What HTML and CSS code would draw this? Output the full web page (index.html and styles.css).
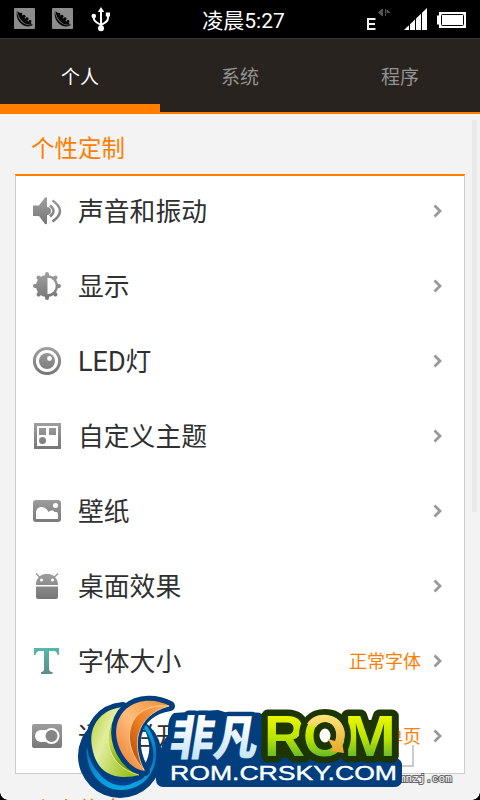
FILE: index.html
```
<!DOCTYPE html>
<html lang="zh-CN">
<head>
    <meta charset="UTF-8">
    <title>设置</title>
    <link rel="stylesheet" href="styles.css">
</head>
<body>
<div class="screen">
    <svg class="defs" width="0" height="0">
        <defs>
            <linearGradient id="gray" x1="0" y1="0" x2="0" y2="30" gradientUnits="userSpaceOnUse">
                <stop offset="0" stop-color="#a2a2a2"/><stop offset="1" stop-color="#737373"/>
            </linearGradient>
            <linearGradient id="teal" x1="0" y1="0" x2="0" y2="1">
                <stop offset="0" stop-color="#55b9aa"/><stop offset="1" stop-color="#5b8f89"/>
            </linearGradient>
            <symbol id="pea" viewBox="0 0 21 21">
                <rect width="21" height="21" rx="1" fill="#8c8c8c"/>
                <path d="M3 2.500C3 8 6 13 10 15.500c3 2 6 2 9.500 1-3 2.500-8 2.500-11.500 0C3.500 13 2 8 3 2.500z" fill="#050505"/>
                <path d="M3.500 3C6 5 8 6.500 9 8l5 5 4.500 3.500q-6 1-9-2Q4 10 3.500 3z" fill="#050505"/>
                <g fill="#050505"><circle cx="7" cy="6" r="1.300"/><circle cx="10" cy="8.200" r="1.500"/><circle cx="13" cy="10.800" r="1.600"/><circle cx="16" cy="13.500" r="1.400"/></g>
            </symbol>
            <symbol id="arrow" viewBox="0 0 10 14">
                <path d="M1.500 1.500 7 7l-5.500 5.500" fill="none" stroke="#999" stroke-width="2.800"/>
            </symbol>
        </defs>
    </svg>

    <div class="statusbar">
        <div class="status-left">
            <svg width="21" height="21"><use href="#pea"/></svg>
            <svg width="21" height="21"><use href="#pea"/></svg>
            <svg class="usb" width="20" height="25" viewBox="0 0 20 25">
                <path d="M10 4v17M2.800 9v2.500c0 3 3 4 7.200 6.500 4-2 7-3.500 7-7V8" fill="none" stroke="#fff" stroke-width="2"/>
                <path d="M10 0l3.200 5H6.800z" fill="#fff"/>
                <circle cx="2.800" cy="9" r="2.300" fill="#fff"/><circle cx="10" cy="21.200" r="3" fill="#fff"/><path d="M14.800 5.500h4.200v4h-4.200z" fill="#fff"/>
            </svg>
        </div>
        <div class="time">凌晨5:27</div>
        <svg class="status-right" width="101" height="24" viewBox="0 0 101 24">
            <path d="M1 11h8.500M1 16h8M1 21h8.500M2 10v12" fill="none" stroke="#eee" stroke-width="2"/>
            <path d="M16.500 1v7l-4-3.500zM19.500 1v7M21 2l3 2.500h-3z" stroke="#555" stroke-width="1" fill="#555"/>
            <path d="M38 22 61 0v22z" fill="#fff"/>
            <path d="M43.500 14v8M49.500 10v12M55.500 4v18" stroke="#000" stroke-width="1"/>
            <path d="M73 4h27v16H73v-3.500h-2v-9h2z" fill="#fff"/>
            <rect x="75.500" y="6.500" width="22" height="11" rx="1" fill="#fff" stroke="#000"/>
        </svg>
    </div>

    <div class="tabs">
        <div class="tab active">个人</div>
        <div class="tab">系统</div>
        <div class="tab">程序</div>
    </div>

    <div class="content">
        <h2 class="section-title">个性定制</h2>
        <div class="card">
            <div class="row">
                <svg class="icon" viewBox="0 0 30 30">
                    <path d="M1 9.500h6L13 1.500q2-1 2 1v8.500a4 4 0 0 1 0 8V27q0 2-2 1l-6-8H1z" fill="url(#gray)"/>
                    <path d="M18 9.500q7 5.500 0 11M20.500 4.500q15 10.500 0 21" fill="none" stroke="url(#gray)" stroke-width="2.500"/>
                </svg>
                <span class="label">声音和振动</span>
                <svg class="arrow"><use href="#arrow"/></svg>
            </div>
            <div class="row">
                <svg class="icon" viewBox="0 0 30 30">
                    <path d="M15 3v24M3 15h24M6.500 6.500l17 17M23.500 6.500l-17 17" stroke="url(#gray)" stroke-width="4" stroke-linecap="round"/>
                    <circle cx="15" cy="15" r="11" fill="url(#gray)"/>
                    <path d="M15.500 6.800a8.200 8.200 0 0 1 0 16.400z" fill="#fff"/>
                </svg>
                <span class="label">显示</span>
                <svg class="arrow"><use href="#arrow"/></svg>
            </div>
            <div class="row">
                <svg class="icon" viewBox="0 0 30 30">
                    <circle cx="15" cy="15" r="12.600" fill="none" stroke="url(#gray)" stroke-width="3"/>
                    <circle cx="15" cy="15" r="8" fill="url(#gray)"/>
                    <circle cx="17.500" cy="12.500" r="2.400" fill="#fff"/>
                </svg>
                <span class="label"><span class="latin">LED</span>灯</span>
                <svg class="arrow"><use href="#arrow"/></svg>
            </div>
            <div class="row">
                <svg class="icon" viewBox="0 0 30 30">
                    <path d="M2 2h27v26H2zM5 5v20h21V5z" fill="url(#gray)" fill-rule="evenodd"/>
                    <path d="M7 7h7v7H7zM17 7h7v7h-7z" fill="url(#gray)"/>
                    <circle cx="10.500" cy="19.500" r="3.500" fill="url(#gray)"/>
                </svg>
                <span class="label">自定义主题</span>
                <svg class="arrow"><use href="#arrow"/></svg>
            </div>
            <div class="row">
                <svg class="icon" viewBox="0 0 30 30">
                    <rect x="1" y="4" width="28" height="22" rx="3" fill="url(#gray)"/>
                    <path d="M4 23v-7c1-7 10-6 12.500 0 3-2.500 5.500-1.500 6 0h2.500q1.500 1 1 7z" fill="#fff"/>
                    <circle cx="23.500" cy="9.500" r="2.500" fill="#fff"/>
                </svg>
                <span class="label">壁纸</span>
                <svg class="arrow"><use href="#arrow"/></svg>
            </div>
            <div class="row">
                <svg class="icon" viewBox="0 0 30 30">
                    <path d="M4 2.500l4 4M26 2.500l-4 4" stroke="url(#gray)" stroke-width="1.500"/>
                    <path d="M4 14C4 -1 26 -1 26 14zM4 15.500h22V26q0 2-2 2H6q-2 0-2-2z" fill="url(#gray)"/>
                    <circle cx="9.500" cy="9" r="1.500" fill="#fff"/><circle cx="20.500" cy="9" r="1.500" fill="#fff"/>
                </svg>
                <span class="label">桌面效果</span>
                <svg class="arrow"><use href="#arrow"/></svg>
            </div>
            <div class="row">
                <svg class="icon" viewBox="0 0 30 30">
                    <path d="M2 2h25v7h-1.500q-.5-4-4-4H17v18q0 3 3.500 3v2H9v-2q3 0 3-3V5H8Q4 5 3.500 9H2z" fill="url(#teal)"/>
                </svg>
                <span class="label">字体大小</span>
                <span class="value">正常字体</span>
                <svg class="arrow"><use href="#arrow"/></svg>
            </div>
            <div class="row">
                <svg class="icon" viewBox="0 0 30 30">
                    <rect y="3" width="30" height="24" rx="2" fill="url(#gray)"/>
                    <rect x="3" y="9" width="22" height="12" rx="6" fill="#fff"/>
                    <circle cx="19.500" cy="15" r="7" fill="#858585" stroke="#fff" stroke-width="2"/>
                </svg>
                <span class="label">通知栏开关</span>
                <span class="value">单页</span>
                <svg class="arrow"><use href="#arrow"/></svg>
            </div>
        </div>
        <h2 class="section-title next">个人信息</h2>
    </div>

    <div class="scrollbar"></div>
    <div class="corner left"></div>
    <div class="corner right"></div>

    <div class="site-frame"></div>
    <div class="site">mnzj.com</div>

    <!-- logo -->
    <svg class="logo" width="340" height="112" viewBox="70 688 340 112">
        <defs>
            <linearGradient id="lime" x1="0" y1="0" x2="0" y2="1"><stop offset=".15" stop-color="#f2fa00"/><stop offset=".55" stop-color="#b9e400"/><stop offset=".85" stop-color="#64b82b"/></linearGradient>
            <linearGradient id="ice" x1="0" y1="0" x2="0" y2="1"><stop offset=".3" stop-color="#fff"/><stop offset="1" stop-color="#b4dcf7"/></linearGradient>
            <linearGradient id="leaf" x1="0" y1="0" x2="1" y2=".6"><stop offset="0" stop-color="#b5cf35"/><stop offset=".4" stop-color="#e2eda0"/><stop offset="1" stop-color="#9cc21c"/></linearGradient>
            <linearGradient id="leaf2" x1="0" y1="0" x2="0" y2="1"><stop offset="0" stop-color="#a5cb17"/><stop offset=".5" stop-color="#c6dc3c"/><stop offset="1" stop-color="#5c9100"/></linearGradient>
            <linearGradient id="flame" x1="1" y1="0" x2="0" y2="1"><stop offset="0" stop-color="#f08a30"/><stop offset=".5" stop-color="#ffbd7c"/><stop offset="1" stop-color="#e8792a"/></linearGradient>
            <linearGradient id="flame2" x1="1" y1="0" x2="0" y2="1"><stop offset="0" stop-color="#ffb367"/><stop offset=".5" stop-color="#ef7d22"/><stop offset="1" stop-color="#a94300"/></linearGradient>
            <linearGradient id="sea" x1="0" y1="0" x2="0" y2="1"><stop offset="0" stop-color="#06b0e8"/><stop offset=".5" stop-color="#0876bd"/><stop offset="1" stop-color="#08a9e2"/></linearGradient>
            <linearGradient id="gold" x1="0" y1="0" x2="0" y2="1"><stop offset="0" stop-color="#ffe57b"/><stop offset="1" stop-color="#e6a72b"/></linearGradient>
        </defs>
        <path d="M78 756a42 42 0 0 1 84 0 42 42 0 0 1-84 0zM140 723C135 738 138 755 144 765 152 755 151 736 140 723z" fill="#003e7e" fill-rule="evenodd"/>
        <path d="M88 741C82 762 96 790 121 790c34 0 48-42 21-70l-1 4c16 20 16 40 3 53-16 15-48 1-56-36z" fill="url(#sea)"/>
        <path d="M92 761c9 15 27 25 47 17-9 12-35 12-47-17z" fill="#0a3f96"/>
        <path d="M123 707C101 709 88 726 92 747c3 19 14 30 32 30 6 0 11-1 15-2C119 764 105 737 123 707z" fill="url(#leaf)" stroke="#003e7e" stroke-width="10" paint-order="stroke" stroke-linejoin="round"/>
        <path d="M123 707C99 728 104 766 139 775 117 761 107 735 123 707z" fill="url(#leaf2)" stroke="#edf5b5" stroke-width=".8"/>
        <path d="M170 706C157 699 139 698 126 709c-14 13-12 34-1 49 6 8 12 12 20 13-14-19-16-58 25-65z" fill="url(#flame)" stroke="#003e7e" stroke-width="10" paint-order="stroke" stroke-linejoin="round"/>
        <path d="M169 706C129 702 117 740 144 770 132 746 134 716 169 706z" fill="url(#flame2)" stroke="#ffd79f" stroke-width=".8"/>

        <rect x="156" y="758" width="246" height="29" rx="7" fill="#003e7e"/>
        <path d="M174 713q-7 4-6 22-9 10-7 24l4 4h100V718q-3-7-13-5H228l-10-3z" fill="#003e7e"/>
        <text class="logo-cn" transform="translate(168 755) skewX(-9)" textLength="88" lengthAdjust="spacingAndGlyphs">非凡</text>
        <rect x="275" y="720" width="112" height="38" fill="#1d3500"/>
        <text class="logo-rom" x="264" y="755.500" textLength="41" lengthAdjust="spacingAndGlyphs">R</text>
        <text class="logo-rom" x="344" y="755.500" textLength="52" lengthAdjust="spacingAndGlyphs">M</text>
        <text class="logo-rom" x="303" y="755.500" textLength="44" lengthAdjust="spacingAndGlyphs">O</text>
        <ellipse cx="325" cy="735.500" rx="8" ry="9.500" fill="#fff" stroke="#1d3500" stroke-width="5"/>
        <path d="M307 724c8-14 32-12 37 5 2 6 0 11-2 14l2 10-14-2 3-3-5-9 7 2c4-9-1-19-10-19-4 0-7 2-9 5z" fill="url(#gold)"/>
        <text class="logo-url" x="170" y="780" textLength="227" lengthAdjust="spacingAndGlyphs">ROM.CRSKY.COM</text>
    </svg>
</div>
</body>
</html>
```
FILE: styles.css
```
body {
    margin: 0;
    background: #000;
    font-family: Roboto, "Noto Sans CJK SC", sans-serif;
}
.screen {
    position: relative;
    width: 480px;
    height: 800px;
    overflow: hidden;
    background: #f3f3f3;
}
.defs {
    position: absolute;
}
.statusbar {
    display: grid;
    grid-template-columns: 1fr auto 1fr;
    box-sizing: border-box;
    height: 38px;
    padding: 0 13px 0 14px;
    background: #000;
    color: #fff;
}
.status-left {
    display: flex;
    gap: 17px;
    padding-top: 8px;
}
.status-left .usb {
    margin: -1px 0 0 1px;
}
.time {
    font-size: 21px;
    line-height: 42px;
    padding-left: 6px;
}
.status-right {
    justify-self: end;
    margin-top: 8px;
}
.tabs {
    display: flex;
    box-sizing: border-box;
    height: 76px;
    background: #29231f;
    border-top: 1px solid #3d3632;
    border-bottom: 2px solid #ff7e00;
}
.tab {
    flex: 1;
    box-sizing: border-box;
    text-align: center;
    font-size: 19px;
    line-height: 77px;
    height: 73px;
    color: #929292;
}
.tab.active {
    color: #fff;
    border-bottom: 8px solid #ff7e00;
}
.content {
    padding: 0 15px;
}
.section-title {
    margin: 0;
    padding-left: 16px;
    height: 60px;
    line-height: 71px;
    font-size: 23.5px;
    font-weight: 400;
    color: #ff7e00;
}
.section-title.next {
    line-height: 75px;
}
.card {
    background: #fff;
    border: 1px solid #ccc;
    border-top: 2px solid #ff7e00;
}
.row {
    display: flex;
    align-items: center;
    box-sizing: border-box;
    height: 75px;
    padding: 0 21px 0 16px;
}
.row:first-child {
    height: 72px;
    padding-bottom: 2px;
}
.icon {
    width: 30px;
    height: 30px;
    margin-right: 16px;
}
.label {
    flex: 1;
    padding-top: 2px;
    font-size: 25.8px;
    line-height: 40px;
    color: #303030;
}
.latin {
    font-size: 27px;
}
.value {
    font-size: 18px;
    color: #ff7e00;
    padding-bottom: 2px;
    margin-right: 12px;
}
.arrow {
    width: 10px;
    height: 14px;
}
.scrollbar {
    position: absolute;
    left: 472px;
    top: 120px;
    width: 5px;
    height: 392px;
    background: #e9e9e9;
}
.corner {
    position: absolute;
    bottom: 0;
    width: 8px;
    height: 8px;
}
.corner.left {
    left: 0;
    background: radial-gradient(circle at 100% 0, transparent 7.5px, #000 8px);
}
.corner.right {
    right: 0;
    background: radial-gradient(circle at 0 0, transparent 7.5px, #000 8px);
}
.site-frame {
    position: absolute;
    left: 390px;
    top: 745px;
    width: 22px;
    height: 20px;
    border-right: 2px solid #ccc;
    border-bottom: 2px solid #ccc;
}
.site {
    position: absolute;
    left: 399px;
    top: 772px;
    font: 11px/14px "Liberation Mono", monospace;
    color: #fff;
    -webkit-text-stroke: 2px #666;
    paint-order: stroke fill;
}
.logo {
    position: absolute;
    left: 70px;
    top: 688px;
}
.logo-cn {
    font: 900 47px "Noto Sans CJK SC", sans-serif;
    fill: url(#ice);
    stroke: #003e7e;
    stroke-width: 9px;
    stroke-linejoin: round;
    paint-order: stroke;
}
.logo-rom {
    font: bold 58px "Liberation Sans", sans-serif;
    fill: url(#lime);
    stroke: #1d3500;
    stroke-width: 13px;
    stroke-linejoin: round;
    paint-order: stroke;
}
.logo-url {
    font: 20px "Liberation Sans", sans-serif;
    fill: #fff;
    stroke: #fff;
    stroke-width: .4px;
}
```
